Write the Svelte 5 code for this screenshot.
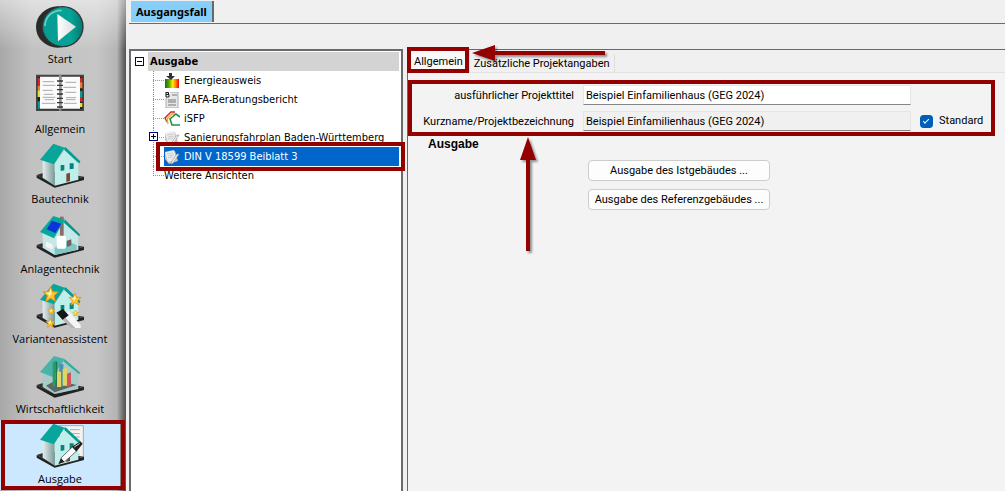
<script lang="ts">
  const modules = ['Start', 'Allgemein', 'Bautechnik', 'Anlagentechnik', 'Variantenassistent', 'Wirtschaftlichkeit', 'Ausgabe'];

  const nodes = [
    { label: 'Energieausweis', icon: 'energy' },
    { label: 'BAFA-Beratungsbericht', icon: 'report' },
    { label: 'iSFP', icon: 'isfp' },
    { label: 'Sanierungsfahrplan Baden-Württemberg', icon: 'note', expandable: true },
    { label: 'DIN V 18599 Beiblatt 3', icon: 'note' },
    { label: 'Weitere Ansichten', icon: '' }
  ];

  let activeModule = $state('Ausgabe');
  let selectedNode = $state('DIN V 18599 Beiblatt 3');
  let activeTab = $state('Allgemein');
  let title = $state('Beispiel Einfamilienhaus (GEG 2024)');
  let shortName = $state('Beispiel Einfamilienhaus (GEG 2024)');
  let standard = $state(true);
</script>

{#snippet base()}
  <path d="M2 96 56 123 144 101V111L56 134 2 104Z" fill="#222" />
  <path d="M2 96 40 84 144 101 56 124Z" fill="#303030" />
{/snippet}

{#snippet house()}
  {@render base()}
  <path d="M20 50 56 62V128L20 104Z" fill="url(#wall)" />
  <path d="M56 62 86 20 127 60V110L56 128Z" fill="#c0eeeb" />
  <path d="M52 2 86 14 54 64 12 50Z" fill="#08a69a" />
  <path d="M84 15 89 13 133 55 131 61 125 58 86 22Z" fill="#079b91" />
  <path d="M74 66h11v16l-11 2ZM101 61h12v16l-12 2Z" fill="#078478" />
  <path d="M91 92 102 89V114L91 117Z" fill="#744938" />
{/snippet}

{#snippet star(x, y, s)}
  <path
    transform="translate({x} {y}) scale({s})"
    d="M0-23 6-8 23-7 10 4 14 21 0 12-15 22-10 4-23-7-7-8Z"
    fill="#ffc62e"
    stroke="#e88d14"
    stroke-width="3"
  />
  <path transform="translate({x} {y}) scale({s})" d="M0-17 3-2-7 10-5 2-15-5-4-6Z" fill="#fff0a0" />
{/snippet}

{#snippet moduleIcon(name)}
  <svg class="module-icon" viewBox="0 0 144 135" aria-hidden="true">
    {#if name === 'Start'}
      <ellipse cx="65" cy="72" rx="65" ry="62" fill="#292b2b" />
      <ellipse cx="80" cy="71" rx="63" ry="62" fill="#303636" />
      <ellipse cx="80" cy="71" rx="59" ry="58" fill="url(#disc)" />
      <path d="M27 69C28 38 51 23 77 22" fill="none" stroke="#6bd0c8" stroke-width="5" />
      <path d="M64 33 120 71 66 115Z" fill="url(#play)" />
    {:else if name === 'Allgemein'}
      <path d="M0 5H144V114H0Z" fill="#454545" />
      <path d="M5 11H139V109H5Z" fill="#202020" />
      <path d="M12 11H69V107H12ZM76 11H132V107H76Z" fill="#fbfbfb" />
      <path d="M5 15h7v23H5ZM132 15h7v13h-7ZM132 72h7v14h-7Z" fill="#e21f26" />
      <path d="M5 38h7v14H5ZM132 28h7v18h-7Z" fill="#ee7c33" />
      <path d="M5 52h7v20H5ZM132 90h7v12h-7Z" fill="#e6df38" />
      <path d="M5 85h7v22H5ZM132 54h7v18h-7Z" fill="#079d91" />
      <path d="M69 5h7v108h-7Z" fill="#929292" />
      <path d="M20 26h34M20 37h38M20 52h30M24 64h28M20 73h38M26 80h28M18 91h40M88 28h33M82 43h38M88 58h32M90 74h30M90 80h28M84 91h38" stroke="#aaa" stroke-width="3" />
      <path d="M63 24h18M63 37h18M63 50h18M63 63h18M63 76h18M63 89h18M63 102h18" stroke="#343434" stroke-width="4" />
    {:else if name === 'Anlagentechnik'}
      {@render base()}
      <path d="M20 50 86 22 127 65V110L56 126 20 104Z" fill="#c4e7e7" />
      <path d="M72 11h11v60H72Z" fill="#8c6b68" />
      <path d="M30 86 50 94V110L30 101Z" fill="#f4f4f4" />
      <path d="M56 106 76 78 122 96V110L56 126Z" fill="#7ec7c2" />
      <rect x="62" y="68" width="28" height="39" rx="5" fill="#fff" />
      <path d="M93 83 106 79V97L93 102Z" fill="#765e63" />
      <path d="M52 9 86 20 54 76 12 57Z" fill="#08a69a" />
      <path d="M86 19 133 65 129 70 84 29Z" fill="#07968b" />
      <path d="M48 23 76 32 58 60 32 49Z" fill="#0934db" />
    {:else if name === 'Wirtschaftlichkeit'}
      {@render base()}
      <path d="M20 50 86 22 127 58V108L56 123 20 102Z" fill="#a9cbc8" />
      <path d="M30 98 60 82 122 96 56 118Z" fill="#5d6766" />
      <path d="M54 9 86 18 50 72 12 57Z" fill="#48b4a9" />
      <path d="M86 18 133 59 129 64 82 25Z" fill="#35aca0" />
      <path d="M50 28 59 24V99L50 101Z" fill="#339867" />
      <path d="M59 24 64 27V99H59Z" fill="#1d7855" />
      <path d="M70 34 82 33V99L70 103Z" fill="#4b8fb0" />
      <path d="M63 56h12v46H63ZM80 48l14-4v54H80Z" fill="#dfd661" />
      <path d="M93 62 105 58V98L93 103Z" fill="#cf5360" />
    {:else}
      {#if name === 'Ausgabe'}
        <path d="M70 8H142V107H70Z" fill="#f3f3f3" stroke="#aaa" stroke-width="3" />
        <path d="M102 20h29M88 32h43M96 42h35M106 52h25M110 63h21M115 94h16" stroke="#aaa" stroke-width="3" />
      {/if}
      {@render house()}
      {#if name === 'Variantenassistent'}
        {@render star(44, 34, 1)}
        {@render star(117, 49, 0.8)}
        {@render star(46, 84, 0.5)}
        {@render star(43, 120, 0.6)}
        {@render star(119, 91, 0.4)}
        <path d="M80 96 98 84 134 126V135H110Z" fill="#f5f5f5" />
        <path d="M61 89 81 78 98 97 80 111Z" fill="#171717" />
        <path d="M80 111 88 104 118 135H106Z" fill="#b5b5b5" />
      {:else if name === 'Ausgabe'}
        <path d="M76 104 110 71 122 84 86 116 72 119Z" fill="#fafafa" stroke="#333" stroke-width="2" />
        <path d="M108 71 133 55 140 62 121 86Z" fill="#202020" />
        <path d="M115 72 131 61" stroke="#ddd" stroke-width="3" />
        <path d="M67 124 75 106 85 116Z" fill="#202020" />
      {/if}
    {/if}
  </svg>
{/snippet}

{#snippet nodeIcon(name)}
  <svg class="node-icon" viewBox="0 0 16 16" aria-hidden="true">
    {#if name === 'energy'}
      <rect x="1" y="6" width="14" height="9" fill="url(#scale)" />
      <path d="M5 0h3v3h3L7 7 2 3h3Z" fill="#333" />
    {:else if name === 'report'}
      <path d="M2 0h12v16H2Z" fill="#e8e8e8" stroke="#aaa" />
      <path d="M8 3h5M4 8h8M4 10h8M4 13h8" stroke="#777" />
      <path d="M1 0h5v6H1Z" fill="#fff" />
      <path d="M2 0v5M2 .5h2.5v2H2h3v2.5H2" fill="none" stroke="#111" />
    {:else if name === 'isfp'}
      <path d="M3 11 1 7 7 1h4" fill="none" stroke="#c92c2c" stroke-width="1.4" />
      <path d="M4 13 3 8 8 3h3" fill="none" stroke="#f4a81c" stroke-width="1.4" />
      <path d="M16 6 12 3 6 8 8 14h8" fill="none" stroke="#199447" stroke-width="1.6" />
    {:else}
      <path d="M1 4 11 2 14 12 5 15 1 10Z" fill="#c4c4c4" />
      <path d="M1 3 10 1 12 11 4 13Z" fill="#ececec" />
      <path d="M3 5 9 4M4 7 10 6M4 9 9 8" stroke="#ccc" />
      <path d="M15 5 9 14 7 15 8 12 13 5Z" fill="#f5f5f5" stroke="#999" stroke-width=".7" />
    {/if}
  </svg>
{/snippet}

<svg class="defs" aria-hidden="true">
  <linearGradient id="wall"><stop stop-color="#e5eeee" /><stop offset="1" stop-color="#789b99" /></linearGradient>
  <linearGradient id="disc"><stop stop-color="#079b90" /><stop offset=".7" stop-color="#06a397" /><stop offset="1" stop-color="#057a72" /></linearGradient>
  <linearGradient id="play"><stop stop-color="#fff" /><stop offset="1" stop-color="#d6dcdc" /></linearGradient>
  <linearGradient id="scale">
    <stop stop-color="#087319" /><stop offset=".3" stop-color="#62a800" /><stop offset=".55" stop-color="#ffee00" /><stop offset=".8" stop-color="#ff6b00" /><stop offset="1" stop-color="#f00000" />
  </linearGradient>
</svg>

<div class="app">
  <nav class="sidebar">
    {#each modules as name}
      <button class="module" class:active={activeModule === name} class:marked={name === 'Ausgabe'} onclick={() => (activeModule = name)}>
        {@render moduleIcon(name)}
        <span>{name}</span>
      </button>
    {/each}
  </nav>

  <main>
    <div class="case-tabs">
      <button class="case-tab">Ausgangsfall</button>
    </div>

    <div class="panes">
      <section class="tree">
        <div class="tree-root">
          <button class="expander" aria-label="Ausgabe zuklappen"></button>
          <strong>Ausgabe</strong>
        </div>
        <ul>
          {#each nodes as node}
            <li>
              {#if node.expandable}
                <button class="expander plus" aria-label="{node.label} aufklappen"></button>
              {/if}
              <button
                class="node"
                class:selected={selectedNode === node.label}
                class:marked={node.label === 'DIN V 18599 Beiblatt 3'}
                onclick={() => (selectedNode = node.label)}
              >
                {#if node.icon}{@render nodeIcon(node.icon)}{/if}
                <span>{node.label}</span>
              </button>
            </li>
          {/each}
        </ul>
      </section>

      <section class="detail">
        <div class="tabs" role="tablist">
          {#each ['Allgemein', 'Zusätzliche Projektangaben'] as tab}
            <button role="tab" class="tab" class:marked={tab === 'Allgemein'} aria-selected={activeTab === tab} onclick={() => (activeTab = tab)}>{tab}</button>
          {/each}
          <svg class="arrow arrow-left" viewBox="0 0 140 20" aria-hidden="true">
            <path d="M1 9 24 1V7H134V11H24V17Z" fill="#920000" />
          </svg>
        </div>

        <div class="form">
          <label for="title">ausführlicher Projekttitel</label>
          <input id="title" type="text" bind:value={title} />
          <span></span>
          <label for="short">Kurzname/Projektbezeichnung</label>
          <input id="short" type="text" bind:value={shortName} readonly={standard} />
          <label class="check"><input type="checkbox" bind:checked={standard} />Standard</label>
        </div>

        <div class="output">
          <h2>Ausgabe</h2>
          <div class="actions">
            <button>Ausgabe des Istgebäudes ...</button>
            <button>Ausgabe des Referenzgebäudes ...</button>
          </div>
          <svg class="arrow arrow-up" viewBox="0 0 20 120" aria-hidden="true">
            <path d="M9 1 17 24H11V115H7V24H1Z" fill="#920000" />
          </svg>
        </div>
      </section>
    </div>
  </main>
</div>

<style>
  :global(body) {
    margin: 0;
    background: #f0f0f0;
  }

  button,
  input {
    font: inherit;
    color: inherit;
  }

  button {
    border: 0;
    padding: 0;
    background: none;
  }

  .defs {
    position: absolute;
    width: 0;
    height: 0;
  }

  .app {
    display: flex;
    min-height: 100vh;
    font-family: Roboto, 'Liberation Sans', sans-serif;
    font-size: 11px;
    color: #000;
  }

  .sidebar {
    flex: none;
    width: 126px;
    box-sizing: border-box;
    padding-right: 6px;
    background:
      linear-gradient(rgba(255, 255, 255, 0.5), rgba(255, 255, 255, 0) 50px),
      linear-gradient(90deg, #a8a8a8, #c2c2c2 32px, #c6c6c6 96px, #b4b4b4 117px, #777 122px, #505050);
    font-family: 'Open Sans', 'Segoe UI', sans-serif;
  }

  .module {
    position: relative;
    display: flex;
    flex-direction: column;
    align-items: center;
    width: 100%;
    height: 70px;
    box-sizing: border-box;
    padding-top: 3px;
    line-height: 16px;
    white-space: nowrap;
  }

  .module span {
    margin-top: 3px;
  }

  .module-icon {
    flex: none;
    width: 48px;
    height: 45px;
  }

  .module.active {
    background: #cce8ff;
  }

  .marked::after {
    content: '';
    position: absolute;
    border: 4px solid #920000;
    pointer-events: none;
  }

  .module.marked::after {
    inset: 0 -5px 0 1px;
  }

  main {
    flex: 1;
    min-width: 0;
    display: flex;
    flex-direction: column;
    padding-left: 3px;
  }

  .case-tabs {
    height: 22px;
    padding: 1px 0 0 2px;
    border-bottom: 1px solid #6b6b6b;
  }

  .case-tab {
    height: 21px;
    padding: 0 5px;
    border-right: 2px solid #696969;
    background: #87cefa;
    font: bold 11px 'Noto Sans', sans-serif;
  }

  .panes {
    flex: 1;
    display: flex;
    gap: 4px;
    margin-top: 25px;
  }

  .tree {
    flex: none;
    width: 274px;
    box-sizing: border-box;
    padding: 1px 2px 0 4px;
    border: 2px solid #696970;
    border-bottom: 0;
    background: #fff;
    font-family: 'DejaVu Sans Condensed', Tahoma, sans-serif;
    line-height: 19px;
  }

  .tree-root {
    display: flex;
    align-items: center;
    gap: 4px;
  }

  .tree-root strong {
    flex: 1;
    padding-left: 2px;
    background: #d3d3d3;
  }

  .expander {
    position: relative;
    width: 9px;
    height: 9px;
    border: 1px solid #000080;
    background: linear-gradient(#000, #000) center / 5px 1px no-repeat #fff;
  }

  .expander.plus {
    position: absolute;
    left: -4px;
    top: 4px;
    background:
      linear-gradient(#000, #000) center / 5px 1px no-repeat,
      linear-gradient(#000, #000) center / 1px 5px no-repeat #fff;
  }

  ul {
    list-style: none;
    margin: 0 0 0 18px;
    padding: 0;
  }

  li {
    position: relative;
    padding-left: 11px;
    background: linear-gradient(90deg, #999 1px, transparent 1px) 0 9px / 2px 1px repeat-x;
  }

  li::before {
    content: '';
    position: absolute;
    left: 0;
    top: 0;
    height: 100%;
    border-left: 1px dotted #888;
  }

  li:last-child::before {
    height: 50%;
  }

  .node {
    position: relative;
    display: flex;
    align-items: center;
    gap: 4px;
    width: 100%;
    height: 19px;
    background: #fff;
    white-space: nowrap;
  }

  .node.selected {
    background: #0066cc;
    color: #fff;
  }

  .node.marked {
    z-index: 1;
  }

  .node.marked::after {
    inset: -5px -6px -5px -8px;
  }

  .node-icon {
    flex: none;
    width: 16px;
    height: 16px;
  }

  .detail {
    flex: 1;
    min-width: 0;
    border-top: 1px solid #696969;
    border-left: 1px solid #696969;
    background: #f3f3f3;
  }

  .tabs {
    position: relative;
    display: flex;
    align-items: flex-end;
    height: 22px;
    border-bottom: 1px solid #e2e2e2;
    background: #f0f0f0;
  }

  .tab {
    position: relative;
    height: 18px;
    padding: 0 4px;
    border-right: 1px solid #ddd;
    white-space: nowrap;
  }

  .tab[aria-selected='true'] {
    height: 22px;
    padding: 0 6px;
    background: #f9f9f9;
  }

  .tab.marked::after {
    inset: -3px 0 -1px -1px;
  }

  .arrow {
    position: absolute;
    filter: drop-shadow(2px 2px 1px rgba(0, 0, 0, 0.4));
    pointer-events: none;
  }

  .arrow-left {
    left: 63px;
    top: -6px;
    width: 140px;
    height: 20px;
  }

  .form {
    display: grid;
    grid-template-columns: 162px 1fr 62px;
    grid-auto-rows: 20px;
    gap: 6px 9px;
    margin: 7px 10px 0 0;
    padding: 1px 9px 1px 0;
    border: 4px solid #920000;
    line-height: 22px;
  }

  .form > label {
    text-align: right;
    white-space: nowrap;
  }

  .form input[type='text'] {
    min-width: 0;
    box-sizing: border-box;
    padding: 1px 2px 0;
    border: 1px solid #e5e5e5;
    border-bottom-color: #868686;
    background: #fff;
  }

  .form input[readonly] {
    background: #f0f0f0;
  }

  .form .check {
    display: flex;
    align-items: center;
    gap: 6px;
  }

  .check input {
    appearance: none;
    flex: none;
    width: 13px;
    height: 13px;
    margin: 0;
    border: 1px solid #868686;
    border-radius: 3px;
  }

  .check input:checked {
    border-color: #005fb8;
    background: linear-gradient(#005fb8, #005fb8);
  }

  .check input:checked::before {
    content: '';
    display: block;
    width: 5px;
    height: 2px;
    margin: 3px 0 0 2px;
    border: solid #fff;
    border-width: 0 0 1px 1px;
    transform: rotate(-45deg);
  }

  .output {
    position: relative;
  }

  h2 {
    margin: 0 0 0 20px;
    font-family: 'Liberation Sans', Arial, sans-serif;
    font-size: 12px;
    line-height: 16px;
  }

  .actions {
    display: flex;
    flex-direction: column;
    gap: 8px;
    width: 182px;
    margin: 8px 0 0 180px;
  }

  .actions button {
    height: 21px;
    border: 1px solid #ccc;
    border-radius: 4px;
    background: #fdfdfd;
    white-space: nowrap;
  }

  .arrow-up {
    left: 111px;
    top: 0;
    width: 20px;
    height: 120px;
  }
</style>
